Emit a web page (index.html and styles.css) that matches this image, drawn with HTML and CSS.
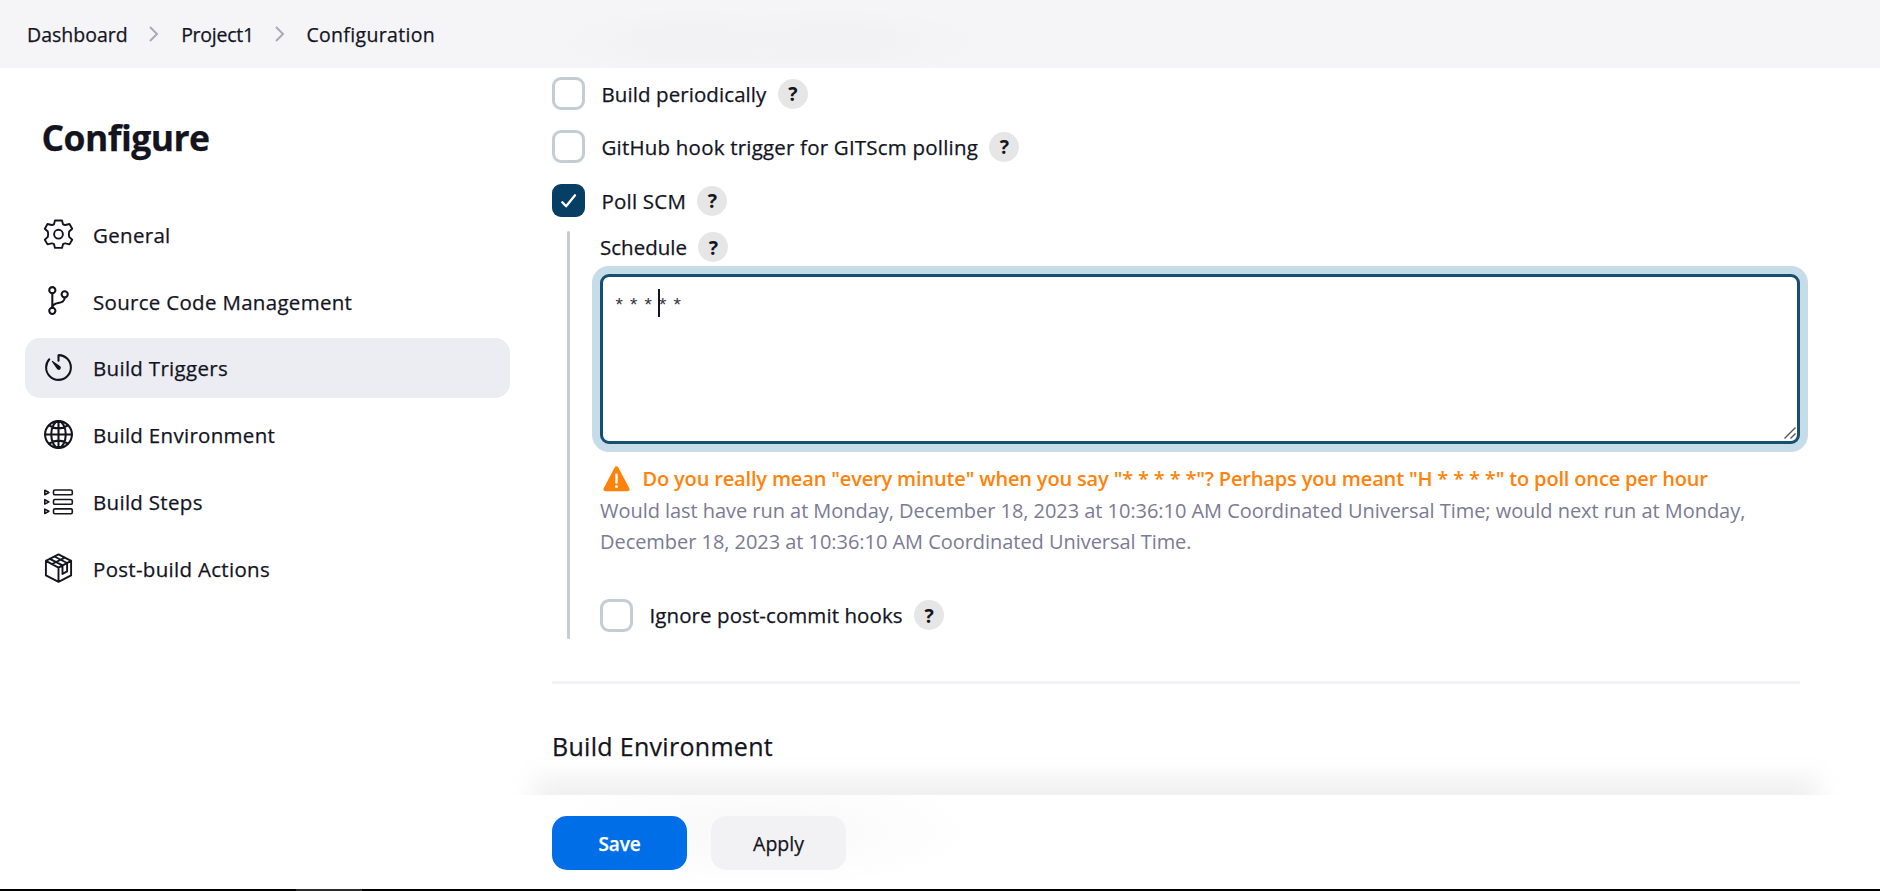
FILE: index.html
```
<!DOCTYPE html>
<html lang="en">
<head>
<meta charset="utf-8">
<title>Project1 Config [Jenkins]</title>
<link rel="stylesheet" href="styles.css">
</head>
<body>
<header class="breadcrumbs">
  <a>Dashboard</a>
  <svg class="chevron" viewBox="0 0 10 16"><path d="M1 1l7 7-7 7"/></svg>
  <a class="project">Project1</a>
  <svg class="chevron" viewBox="0 0 10 16"><path d="M1 1l7 7-7 7"/></svg>
  <a class="current">Configuration</a>
</header>

<div class="page">
  <aside class="sidebar">
    <h1>Configure</h1>
    <nav class="tasks">
      <a class="task">
        <svg class="icon" viewBox="-16.5 -17.2 33 33"><path class="s2" d="M-3.5-13.7H3.5L4.6-9.8Q5.7-9.1 6.8-9.2L11-10.2L13.7-5.5L10.7-2.7Q9.9 0 10.7 2.7L13.7 5.5L11 10.2L6.8 9.2Q5.7 9.1 4.6 9.8L3.5 13.7H-3.5L-4.6 9.8Q-5.7 9.1-6.8 9.2L-11 10.2L-13.7 5.5L-10.7 2.7Q-9.9 0-10.7-2.7L-13.7-5.5L-11-10.2L-6.8-9.2Q-5.7-9.1-4.6-9.8Z"/><circle class="s2" r="4.4"/></svg>
        <span>General</span>
      </a>
      <a class="task">
        <svg class="icon" viewBox="0 0 512 512"><circle cx="160" cy="96" r="48"/><circle cx="160" cy="416" r="48"/><path d="M160 368V144"/><circle cx="352" cy="160" r="48"/><path d="M352 208c0 128-192 48-192 160"/></svg>
        <span>Source Code Management</span>
      </a>
      <a class="task active">
        <svg class="icon" viewBox="0 0 512 512"><path d="M112.91 128A191.85 191.85 0 0064 254c-1.18 106.35 85.65 193.8 192 194 106.2.2 192-85.83 192-192 0-104.54-83.55-189.61-187.5-192a4.36 4.36 0 00-4.5 4.37V152"/><path class="solid" d="M233.38 278.63l-79-113a8.13 8.13 0 0111.32-11.32l113 79a32.5 32.5 0 01-37.25 53.26 33.21 33.21 0 01-8.07-7.94z"/></svg>
        <span>Build Triggers</span>
      </a>
      <a class="task">
        <svg class="icon" viewBox="0 0 512 512"><circle cx="256" cy="256" r="208"/><path d="M256 48c-58.07 0-112.67 93.13-112.67 208S197.93 464 256 464s112.67-93.13 112.67-208S314.07 48 256 48zM117.33 117.33c38.24 27.15 86.38 43.34 138.67 43.34s100.43-16.19 138.67-43.34M394.67 394.67c-38.24-27.15-86.38-43.34-138.67-43.34s-100.43 16.19-138.67 43.34M256 48v416M464 256H48"/></svg>
        <span>Build Environment</span>
      </a>
      <a class="task">
        <svg class="icon" viewBox="-16.5 -16.5 33 33"><g class="s15"><path d="M-13.7-11.2V-6.8L-9.6-9ZM-13.7-1.8V2.6L-9.6.4ZM-13.7 7.6V12L-9.6 9.8Z"/><rect x="-5" y="-11.5" width="18.8" height="4.8" rx="1.4"/><rect x="-5" y="-2" width="18.8" height="4.8" rx="1.4"/><rect x="-5" y="7.4" width="18.8" height="4.8" rx="1.4"/></g></svg>
        <span>Build Steps</span>
      </a>
      <a class="task">
        <svg class="icon" viewBox="-16.5 -17 33 33"><g class="s18"><path d="M0-13.6L12.6-7.2V7.4L0 13.8L-12.6 7.4V-7.2ZM-12.6-7.2L0-.4L12.6-7.2M0-.4V13.8M-8.6-9.2L4-2.6V6L8.6 3.4V-5L-4-11.5M-6.3-4L6.3-10.4"/></g></svg>
        <span>Post-build Actions</span>
      </a>
    </nav>
  </aside>

  <main class="config">
    <div class="option tight"><span class="box"></span><label>Build periodically</label><button class="help">?</button></div>
    <div class="option hook"><span class="box"></span><label>GitHub hook trigger for GITScm polling</label><button class="help">?</button></div>
    <div class="option"><span class="box checked"><svg viewBox="0 0 33 33"><path d="M10.3 18.3l3.8 4 8.9-11"/></svg></span><label>Poll SCM</label><button class="help">?</button></div>

    <section class="nested">
      <div class="field-label"><label>Schedule</label><button class="help">?</button></div>
      <div class="field">
        <textarea class="schedule" spellcheck="false">* * * * *</textarea>
        <span class="caret"></span>
        <svg class="grip" viewBox="0 0 12 12"><path d="M.5 11.5l11-11M6.5 11.5l5-5"/></svg>
      </div>
      <p class="warning">
        <svg class="alert" viewBox="0 0 27 26"><path class="tri" d="M11.6 1.4a2.1 2.1 0 0 1 3.7 0L26.3 22.2a2.1 2.1 0 0 1-1.9 3.1H2.6A2.1 2.1 0 0 1 .7 22.2z"/><path class="bang" d="M13.5 8.6v8"/><circle class="dot" cx="13.5" cy="20.6" r="1.5"/></svg>
        <span>Do you really mean "every minute" when you say "* * * * *"? Perhaps you meant "H * * * *" to poll once per hour</span>
      </p>
      <p class="detail">Would last have run at Monday, December 18, 2023 at 10:36:10 AM Coordinated Universal Time; would next run at Monday, December 18, 2023 at 10:36:10 AM Coordinated Universal Time.</p>
      <div class="option tight ignore"><span class="box"></span><label>Ignore post-commit hooks</label><button class="help">?</button></div>
    </section>

    <hr class="divider">
    <h2>Build Environment</h2>
  </main>
</div>

<footer class="actions">
  <button class="btn primary">Save</button>
  <button class="btn">Apply</button>
</footer>
<div class="edge"></div>
</body>
</html>
```
FILE: styles.css
```
* { box-sizing: border-box; }

body {
  margin: 0;
  height: 891px;
  display: flex;
  flex-direction: column;
  overflow: hidden;
  background: #fff;
  color: #14141f;
  font-family: "Open Sans", "Noto Sans", sans-serif;
  font-size: 20.5px;
  -webkit-text-stroke: 0.25px;
}

h1, h2, p, hr { margin: 0; }
button { font-family: inherit; color: inherit; border: 0; padding: 0; -webkit-text-stroke: inherit; }

.breadcrumbs {
  flex: none;
  height: 68px;
  display: flex;
  align-items: center;
  padding: 0 0 0 27px;
  font-size: 19.5px;
  background:
    radial-gradient(ellipse 130px 34px at 690px 42px, #f2f2f4 40%, transparent),
    radial-gradient(ellipse 150px 34px at 830px 42px, #f2f2f4 40%, transparent),
    #f5f5f8;
}
.breadcrumbs .project { letter-spacing: -0.25px; }
.breadcrumbs .current { letter-spacing: 0.33px; margin-left: -1px; }
.chevron {
  width: 10px;
  height: 16px;
  margin: 0 22px 0 21.5px;
  fill: none;
  stroke: #a9a9bd;
  stroke-width: 2;
}

.page {
  position: relative;
  flex: none;
  height: 727px;
  display: flex;
  overflow: hidden;
}
/* soft shade rising above the action bar */
.page::after {
  content: "";
  position: absolute;
  left: 534px;
  right: 62px;
  top: 709px;
  height: 80px;
  background: rgba(0, 0, 0, 0.06);
  filter: blur(12px);
  pointer-events: none;
}

.sidebar {
  flex: none;
  width: 552px;
  padding: 45px 42px 0 25px;
}
h1 {
  padding-left: 16.5px;
  font-size: 35.5px;
  line-height: 48px;
  letter-spacing: -0.55px;
  font-weight: 700;
}
.tasks {
  display: flex;
  flex-direction: column;
  gap: 6.8px;
  margin-top: 43.4px;
}
.task {
  display: flex;
  align-items: center;
  height: 60px;
  padding-left: 17px;
  border-radius: 15px;
  letter-spacing: 0.3px;
}
.task.active { background: #ecedf3; }
.task span { margin: 0.8px 0 0 18px; }
.icon {
  width: 33px;
  height: 33px;
  margin-top: -1px;
  fill: none;
  stroke: #14141f;
  stroke-width: 32;
  stroke-linecap: round;
  stroke-linejoin: round;
}
.icon .solid { fill: #14141f; stroke: none; }
.icon .s2 { stroke-width: 1.9; }
.icon .s18 { stroke-width: 1.9; }
.icon .s15 { stroke-width: 1.6; }

.config {
  width: 1248px;
  padding-top: 9px;
}
.option {
  display: flex;
  align-items: center;
  height: 33px;
  margin-bottom: 20px;
  letter-spacing: 0.2px;
}
.option.tight { letter-spacing: 0.08px; }
.option.hook { margin-bottom: 21px; }
.box {
  width: 33px;
  height: 33px;
  margin-right: 16.5px;
  border: 3px solid #c3cdd3;
  border-radius: 9px;
}
.box.checked { border: 0; background: #063f63; }
.box svg { display: block; fill: none; stroke: #fff; stroke-width: 2.3; stroke-linecap: round; stroke-linejoin: round; }
.help {
  width: 30px;
  height: 30px;
  margin-left: 11.4px;
  border-radius: 50%;
  background: #e6e6e6;
  font-size: 19.5px;
  line-height: 29px;
  font-weight: 700;
  text-align: center;
  -webkit-text-stroke: 0;
}

.nested {
  position: relative;
  height: 408px;
  margin: -6px 0 0 15px;
  padding-left: 33px;
}
.nested::before {
  content: "";
  position: absolute;
  left: 0;
  top: 0;
  bottom: 0;
  width: 3px;
  border-radius: 2px;
  background: #c3cdd3;
}
.field-label {
  display: flex;
  align-items: center;
  height: 32px;
}
.field { position: relative; margin-top: 11px; }
.schedule {
  display: block;
  width: 1200px;
  height: 170px;
  padding: 16px 10.5px;
  border: 3px solid #164f6f;
  border-radius: 9px;
  outline: none;
  box-shadow: 0 0 0 8px #c6dce8;
  background: #fff;
  color: #33333d;
  font: 19px/26px "Liberation Mono", monospace;
  letter-spacing: -4.15px;
  resize: none;
  -webkit-text-stroke: 0;
}
.caret {
  position: absolute;
  left: 58px;
  top: 15px;
  width: 2px;
  height: 28px;
  background: #14141f;
}
.grip {
  position: absolute;
  right: 4px;
  bottom: 5px;
  width: 12px;
  height: 12px;
  fill: none;
  stroke: #55555c;
  stroke-width: 1.4;
}
.warning {
  display: flex;
  align-items: center;
  height: 31.5px;
  margin-top: 19px;
  color: #ff820a;
  font-size: 20px;
  font-weight: 600;
  letter-spacing: -0.16px;
  white-space: nowrap;
  -webkit-text-stroke: 0;
}
.alert { width: 27px; height: 26px; margin: 0 13px 0 2.5px; }
.tri { fill: #ff820a; }
.bang { stroke: #fff; stroke-width: 2.4; stroke-linecap: round; }
.dot { fill: #fff; }
.detail {
  color: #7b7b93;
  font-size: 20px;
  line-height: 31.5px;
  letter-spacing: -0.045px;
  -webkit-text-stroke: 0;
}
.ignore { margin: 41px 0 0; }

.divider { height: 3px; margin-top: 42px; border: 0; background: #f2f2f8; }
h2 {
  margin-top: 45px;
  font-size: 25px;
  line-height: 34px;
  font-weight: 400;
  letter-spacing: 0.3px;
}

.actions {
  flex: none;
  height: 94px;
  display: flex;
  gap: 24px;
  padding: 21px 0 0 552px;
  background:
    radial-gradient(ellipse 220px 60px at 760px 36px, #fafafa 30%, transparent),
    #fff;
}
.btn {
  width: 135px;
  height: 54px;
  padding-top: 1px;
  border-radius: 15px;
  background: #f2f2f5;
  font-size: 19.5px;
}
.btn.primary {
  padding-top: 2px;
  background: #006ee6;
  color: #fff;
  font-size: 19px;
  font-weight: 600;
  letter-spacing: -0.2px;
}
.edge {
  flex: none;
  height: 2px;
  background: linear-gradient(90deg, #000 296px, #2b2b2b 296px 362px, #000 362px);
}
```
